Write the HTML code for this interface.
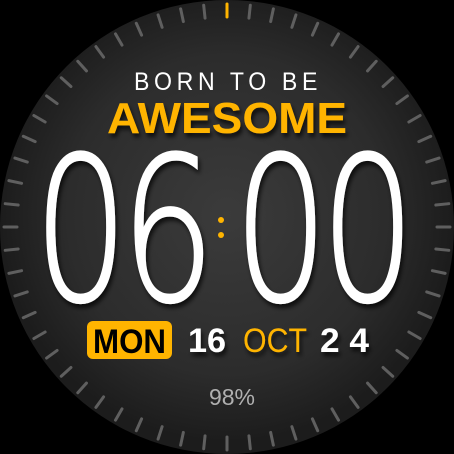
<!DOCTYPE html>
<html><head><meta charset="utf-8"><style>
html,body{margin:0;padding:0;background:#000;width:454px;height:454px;overflow:hidden}
svg{display:block}
</style></head><body>
<svg id="s" width="454" height="454" viewBox="0 0 454 454" xmlns="http://www.w3.org/2000/svg">
<defs>
<radialGradient id="bg" cx="227" cy="215" r="227" gradientUnits="userSpaceOnUse">
<stop offset="0" stop-color="#3b3b3b"/><stop offset="0.7" stop-color="#2c2c2c"/><stop offset="1" stop-color="#1c1c1c"/>
</radialGradient>
<filter id="sh" x="-20%" y="-20%" width="140%" height="140%"><feDropShadow dx="2" dy="4" stdDeviation="2" flood-color="#000" flood-opacity="0.7"/></filter>
</defs>
<circle cx="227" cy="227" r="227" fill="url(#bg)"/>
<g id="ticks"></g>
<text x="228" y="90" text-anchor="middle" font-family="Liberation Sans, sans-serif" font-size="25" fill="#fff" letter-spacing="5" textLength="188" lengthAdjust="spacingAndGlyphs">BORN TO BE</text>
<text x="227" y="133" text-anchor="middle" font-family="Liberation Sans, sans-serif" font-weight="bold" font-size="44" fill="#ffb400" textLength="240" lengthAdjust="spacingAndGlyphs" filter="url(#sh)">AWESOME</text>
<g font-family="DejaVu Sans, sans-serif" font-weight="200" font-size="200" fill="#fff" stroke="#fff" stroke-width="2.5" text-anchor="middle" filter="url(#sh)">
<text transform="translate(81,300) scale(0.74,1)">0</text>
<text transform="translate(168,300) scale(0.74,1)">6</text>
<text transform="translate(281,300) scale(0.74,1)">0</text>
<text transform="translate(368,300) scale(0.74,1)">0</text>
</g>
<circle cx="221" cy="220" r="3" fill="#ffb400"/>
<circle cx="221" cy="235" r="3" fill="#ffb400"/>
<rect x="87" y="321" width="85" height="38" rx="6" fill="#ffb400"/>
<text x="129.5" y="353" text-anchor="middle" font-family="Liberation Sans, sans-serif" font-weight="bold" font-size="34" fill="#000" textLength="73" lengthAdjust="spacingAndGlyphs">MON</text>
<g filter="url(#sh)" font-family="Liberation Sans, sans-serif" font-size="34">
<text x="188" y="352" font-weight="bold" fill="#fff" textLength="38" lengthAdjust="spacingAndGlyphs">16</text>
<text x="243" y="352" fill="#ffb400" textLength="64" lengthAdjust="spacingAndGlyphs">OCT</text>
<text x="320" y="352" font-weight="bold" fill="#fff" textLength="49" lengthAdjust="spacingAndGlyphs">2 4</text>
</g>
<text x="232" y="405" text-anchor="middle" font-family="Liberation Sans, sans-serif" font-size="23" fill="#b0b0b0">98%</text>
</svg>
<script>
var g=document.getElementById('ticks'),h='';
for(var i=0;i<60;i++){var a=i*6;var c=i==0?'#ffb400':'#5f5f5f';
h+='<line x1="227" y1="4" x2="227" y2="17" stroke="'+c+'" stroke-width="3" stroke-linecap="round" transform="rotate('+a+' 227 227)"/>';}
g.innerHTML=h;
</script>
</body></html>
